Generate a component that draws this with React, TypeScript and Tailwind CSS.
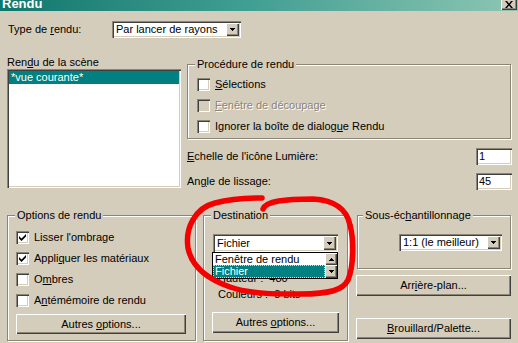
import type { ReactNode } from 'react'

const raised = 'shadow-[inset_1px_1px_0_#fff,inset_-1px_-1px_0_#404040,inset_-2px_-2px_0_#8c8474]'
const sunken = 'shadow-[inset_1px_1px_0_#8c8474,inset_2px_2px_0_#404040,inset_-1px_-1px_0_#fff,inset_-2px_-2px_0_#d5cdbb]'

function Arrow({ up }: { up?: boolean }) {
  return (
    <svg width="5" height="3" viewBox="0 0 5 3" className={up ? 'rotate-180' : ''}>
      <path d="M0 0h5v1h-1v1h-1v1h-1v-1h-1v-1h-1z" fill="#000" />
    </svg>
  )
}

function Box({ checked, disabled }: { checked?: boolean; disabled?: boolean }) {
  return (
    <span
      className={`flex h-[13px] w-[13px] shrink-0 items-center justify-center ${disabled ? 'bg-[#d5cdbb]' : 'bg-white'} ${sunken}`}
    >
      {checked && (
        <svg width="7" height="7" viewBox="0 0 7 7">
          <path d="M0 2 L2.5 4.5 L7 0 V2.5 L2.5 7 L0 4.5 Z" fill="#000" />
        </svg>
      )}
    </span>
  )
}

function Check({ children, checked, disabled }: { children: ReactNode; checked?: boolean; disabled?: boolean }) {
  return (
    <div className="flex h-[21px] items-center gap-[5px]">
      <Box checked={checked} disabled={disabled} />
      <span className={disabled ? 'text-[#8c8474] [text-shadow:1px_1px_0_#fff]' : ''}>{children}</span>
    </div>
  )
}

function Select({ value, className }: { value: string; className: string }) {
  return (
    <div className={`flex bg-white p-[2px] ${sunken} ${className}`}>
      <span className="flex flex-1 items-center overflow-hidden whitespace-nowrap pl-[2px]">{value}</span>
      <span className={`flex w-[13px] items-center justify-center bg-[#d5cdbb] ${raised}`}>
        <Arrow />
      </span>
    </div>
  )
}

function Btn({ children, className }: { children: ReactNode; className: string }) {
  return <div className={`flex items-center justify-center bg-[#d5cdbb] ${raised} ${className}`}>{children}</div>
}

function Group({
  title,
  className,
  titleClass = 'ml-[7px]',
  children,
}: {
  title: ReactNode
  className: string
  titleClass?: string
  children: ReactNode
}) {
  return (
    <div className={`border border-[#8c8474] shadow-[inset_1px_1px_0_#fff,1px_1px_0_#fff] ${className}`}>
      <div className={`-mt-[7px] w-fit bg-[#d5cdbb] px-[2px] leading-[13px] ${titleClass}`}>{title}</div>
      {children}
    </div>
  )
}

export default function App() {
  return (
    <div className="relative h-[343px] w-[518px] overflow-hidden bg-[#d5cdbb] font-['Liberation_Sans',Arial,sans-serif] text-[11px] leading-[13px] text-black">
      {/* barre de titre */}
      <div className="flex h-[11px] items-start justify-between overflow-hidden bg-linear-to-r from-[#0b776d] via-[#42a094] to-[#8cc6b2]">
        <span className="-mt-[3px] ml-[2px] text-[13px] font-bold leading-[14px] text-white">Rendu</span>
        <span className={`-mt-[4px] mr-[1px] flex h-[14px] w-[16px] justify-center bg-[#d5cdbb] pt-[5px] ${raised}`}>
          <svg width="8" height="7" viewBox="0 0 8 7">
            <path d="M0 0h2l2 2.5L6 0h2L5 3.5 8 7H6L4 4.5 2 7H0l3-3.5z" fill="#000" />
          </svg>
        </span>
      </div>

      <div className="mt-[10px] flex h-[17px] items-center">
        <span className="ml-[8px] w-[104px]">
          Type de <u>r</u>endu:
        </span>
        <Select value="Par lancer de rayons" className="h-[17px] w-[129px]" />
      </div>

      <div className="mt-[18px] flex items-start">
        <div className="ml-[7px] w-[174px]">
          <div className="h-[13px]">
            Ren<u>d</u>u de la scène
          </div>
          <div className={`h-[119px] bg-white p-[2px] ${sunken}`}>
            <div className="h-[13px] bg-[#008080] pl-[2px] text-white">*vue courante*</div>
          </div>
        </div>

        <div className="ml-[6px] w-[325px]">
          <Group className="mt-[8px] h-[75px] w-[324px]" title="Procédure de rendu">
            <div className="ml-[9px] mt-[3px]">
              <Check>
                <u>S</u>élections
              </Check>
              <Check disabled>
                <u>F</u>enêtre de découpage
              </Check>
              <Check>
                Ignorer la boîte de dialog<u>u</u>e Rendu
              </Check>
            </div>
          </Group>
          <div className="mt-[9px] flex h-[17px] items-center justify-between">
            <span>
              <u>E</u>chelle de l'icône Lumière:
            </span>
            <div className={`flex h-[17px] w-[36px] items-center bg-white pl-[3px] ${sunken}`}>1</div>
          </div>
          <div className="mt-[8px] flex h-[17px] items-center justify-between">
            <span>
              An<u>g</u>le de lissage:
            </span>
            <div className={`flex h-[17px] w-[36px] items-center bg-white pl-[3px] ${sunken}`}>45</div>
          </div>
        </div>
      </div>

      <div className="mt-[25px] flex items-start">
        <Group className="ml-[7px] h-[126px] w-[189px]" title="Options de rendu">
          <div className="ml-[8px] mt-[5px]">
            <Check checked>Lisser l'ombrage</Check>
            <Check checked>
              Appli<u>q</u>uer les matériaux
            </Check>
            <Check>
              O<u>m</u>bres
            </Check>
            <Check>
              A<u>n</u>témémoire de rendu
            </Check>
          </div>
          <Btn className="ml-[8px] mt-[3px] h-[20px] w-[170px]">
            Autres&nbsp;<u>o</u>ptions...
          </Btn>
        </Group>

        <Group className="ml-[7px] h-[126px] w-[145px]" title="Destination">
          <div className="relative ml-[9px] mt-[12px] w-[125px]">
            <Select value="Fichier" className="h-[18px] w-[125px]" />
            {/* liste déroulante ouverte */}
            <div className="absolute -left-[1px] top-[18px] z-10 flex h-[27px] w-[126px] border border-black bg-white">
              <div className="flex-1">
                <div className="h-[12px] pl-[2px] leading-[12px]">Fenêtre de rendu</div>
                <div className="h-[13px] border border-dotted border-[#e8e090] bg-[#008080] pl-[1px] leading-[11px] text-white">
                  Fichier
                </div>
              </div>
              <div className="flex w-[12px] flex-col">
                <span className={`flex h-[12px] items-center justify-center bg-[#d5cdbb] ${raised}`}>
                  <Arrow up />
                </span>
                <span className={`flex h-[13px] items-center justify-center bg-[#d5cdbb] ${raised}`}>
                  <Arrow />
                </span>
              </div>
            </div>
          </div>
          <div className="ml-[14px] mt-[18px] leading-[16px]">
            <div>Hauteur&nbsp;: &nbsp;480</div>
            <div>Couleurs&nbsp;: &nbsp;8 bits</div>
          </div>
          <Btn className="ml-[8px] mt-[10px] h-[21px] w-[127px]">
            Autres&nbsp;<u>o</u>ptions...
          </Btn>
        </Group>

        <div className="ml-[8px] w-[155px]">
          <Group
            className="ml-[1px] h-[54px] w-[154px]"
            titleClass="ml-[5px]"
            title={
              <>
                Sous-éc<u>h</u>antillonnage
              </>
            }
          >
            <div className="mt-[12px] flex justify-end pr-[8px]">
              <Select value="1:1 (le meilleur)" className="h-[17px] w-[103px]" />
            </div>
          </Group>
          <Btn className="mt-[6px] h-[21px] w-[155px]">
            Arr<u>i</u>ère-plan...
          </Btn>
          <Btn className="mt-[22px] h-[21px] w-[155px]">
            <u>B</u>rouillard/Palette...
          </Btn>
        </div>
      </div>

      {/* annotation rouge */}
      <svg className="pointer-events-none absolute left-0 top-0 z-20" width="518" height="343" viewBox="0 0 518 343">
        <path
          d="M263 209 C266 201, 285 199, 313 199 C335 200, 347 210, 350 225 C354 240, 354 265, 348 280 C343 290, 330 294, 300 294 C275 294, 250 294, 230 287 C210 280, 192 268, 188 248 C185 228, 195 208, 215 203 C230 199, 250 198, 262 198"
          fill="none"
          stroke="#f40000"
          strokeWidth="5.5"
          strokeLinecap="round"
          strokeLinejoin="round"
        />
      </svg>
    </div>
  )
}
